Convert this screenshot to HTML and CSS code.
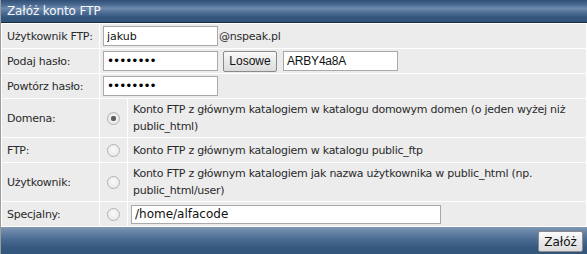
FILE: index.html
```html
<!DOCTYPE html>
<html lang="pl">
<head>
    <meta charset="UTF-8">
    <title>Załóż konto FTP</title>
    <link rel="stylesheet" href="styles.css">
</head>
<body>
    <!-- Create FTP account panel -->
    <div class="panel">
        <div class="panel-head">Załóż konto FTP</div>
        <table class="ftp-form">
            <tr>
                <td class="label">Użytkownik FTP:</td>
                <td colspan="2" class="field">
                    <div class="inline"><input type="text" class="text" value="jakub"><span>@nspeak.pl</span></div>
                </td>
            </tr>
            <tr>
                <td class="label">Podaj hasło:</td>
                <td colspan="2" class="field">
                    <div class="inline wide">
                        <input type="password" class="text" value="ARBY4a8A">
                        <button class="btn">Losowe</button>
                        <input type="text" class="text plain" value="ARBY4a8A">
                    </div>
                </td>
            </tr>
            <tr>
                <td class="label">Powtórz hasło:</td>
                <td colspan="2" class="field">
                    <input type="password" class="text" value="ARBY4a8A">
                </td>
            </tr>
            <tr>
                <td class="label">Domena:</td>
                <td class="radio"><input type="radio" name="dir" checked></td>
                <td class="desc">Konto FTP z głównym katalogiem w katalogu domowym domen (o jeden wyżej niż public_html)</td>
            </tr>
            <tr>
                <td class="label">FTP:</td>
                <td class="radio"><input type="radio" name="dir"></td>
                <td class="desc">Konto FTP z głównym katalogiem w katalogu public_ftp</td>
            </tr>
            <tr>
                <td class="label">Użytkownik:</td>
                <td class="radio"><input type="radio" name="dir"></td>
                <td class="desc">Konto FTP z głównym katalogiem jak nazwa użytkownika w public_html (np. public_html/user)</td>
            </tr>
            <tr>
                <td class="label">Specjalny:</td>
                <td class="radio"><input type="radio" name="dir"></td>
                <td class="desc field"><input type="text" class="text long" value="/home/alfacode"></td>
            </tr>
        </table>
        <div class="panel-foot">
            <button class="btn">Załóż</button>
        </div>
    </div>
</body>
</html>
```

FILE: styles.css
```css
* {
    margin: 0;
    padding: 0;
    box-sizing: border-box;
}

body {
    background: white;
    font-family: "DejaVu Sans", Verdana, sans-serif;
    font-size: 11px;
    letter-spacing: -0.25px;
    color: #2a2a2a;
}

.panel {
    width: 587px;
    border-left: 1px solid #9c9c9c;
}

.panel-head {
    height: 23px;
    padding: 0 6px;
    line-height: 22px;
    font-size: 12px;
    letter-spacing: -0.1px;
    color: #f7f8fb;
    background: linear-gradient(#2f4f77 0%, #4a6a91 22%, #6d8aad 38%, #4a6a91 60%, #33567d 80%, #31547b 100%);
    border-bottom: 1px solid #1c2b3d;
}

.ftp-form {
    width: 100%;
    border-spacing: 1px;
    background: white;
}

.ftp-form td {
    background: #ececec;
    height: 24px;
    vertical-align: middle;
}

.label {
    width: 97px;
    padding: 0 5px;
    white-space: nowrap;
}

.field {
    padding: 1px 3px;
}

.radio {
    width: 27px;
    text-align: center;
}

.desc {
    padding: 2px 5px;
    line-height: 17px;
}

.desc.field {
    padding: 1px 3px;
}

.inline {
    display: flex;
    align-items: center;
    gap: 1px;
}

.inline.wide .btn {
    width: 54px;
    margin: 0 5px 0 4px;
}

.text {
    width: 115px;
    height: 20px;
    padding: 0 3px;
    border: 1px solid #a9a9a9;
    background: white;
    font-family: "DejaVu Sans", Verdana, sans-serif;
    font-size: 11px;
    color: #111;
}

.text.plain {
    height: 20px;
    font-family: "Liberation Sans", Arial, sans-serif;
    font-size: 12px;
    letter-spacing: -0.2px;
}

.text.long {
    width: 310px;
    height: 19px;
    font-size: 12px;
}

input[type="password"] {
    font-size: 12px;
    letter-spacing: -1px;
    color: #000;
}

.btn {
    height: 21px;
    padding: 0;
    border: 1px solid #8a8a8a;
    border-radius: 2px;
    background: linear-gradient(#fbfbfb, #e9e9e9 50%, #dcdcdc);
    font-family: "Liberation Sans", Arial, sans-serif;
    font-size: 12px;
    letter-spacing: 0;
    color: #111;
}

input[type="radio"] {
    appearance: none;
    width: 13px;
    height: 13px;
    margin-top: 3px;
    border: 1px solid #b3b3b3;
    border-radius: 50%;
    background: radial-gradient(circle at 50% 40%, #fafafa, #e4e4e4);
}

input[type="radio"]:checked {
    background: radial-gradient(circle, #555 0, #6a6a6a 2.5px, #efefef 3px, #e4e4e4);
}

.panel-foot {
    height: 29px;
    display: flex;
    justify-content: flex-end;
    align-items: center;
    padding: 0 4px;
    background: linear-gradient(#8299b5 0%, #6d89aa 12%, #4e6e94 40%, #36597f 70%, #31547b 100%);
}

.panel-foot .btn {
    width: 45px;
    font-family: "DejaVu Sans", Verdana, sans-serif;
}
```
